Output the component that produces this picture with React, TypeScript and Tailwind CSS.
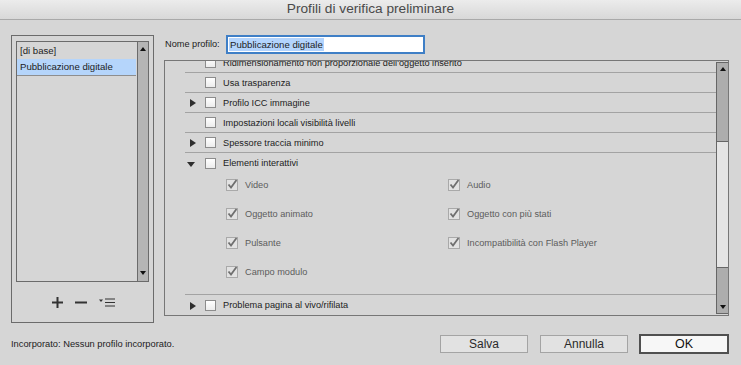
import type { ReactNode } from "react";

type Row = { label: string; arrow?: "right" | "down" };

const TOP_ROWS: Row[] = [
  { label: "Ridimensionamento non proporzionale dell'oggetto inserito" },
  { label: "Usa trasparenza" },
  { label: "Profilo ICC immagine", arrow: "right" },
  { label: "Impostazioni locali visibilità livelli" },
  { label: "Spessore traccia minimo", arrow: "right" },
];

const SUB_ITEMS: string[][] = [
  ["Video", "Audio"],
  ["Oggetto animato", "Oggetto con più stati"],
  ["Pulsante", "Incompatibilità con Flash Player"],
  ["Campo modulo", ""],
];

function Arrow({ dir }: { dir?: "right" | "down" }) {
  if (dir === "right") {
    return (
      <svg width="6" height="8" viewBox="0 0 6 8" className="ml-[5px] mt-[1px]">
        <path d="M0 0 L6 4 L0 8 Z" fill="#2e2e2e" />
      </svg>
    );
  }
  if (dir === "down") {
    return (
      <svg width="8" height="5" viewBox="0 0 8 5" className="ml-[2px] mt-[3px]">
        <path d="M0 0 L8 0 L4 5 Z" fill="#2e2e2e" />
      </svg>
    );
  }
  return null;
}

function Box() {
  return (
    <span className="block h-[11px] w-[11px] shrink-0 border border-[#8c8c8c] bg-gradient-to-b from-white to-[#ececec]" />
  );
}

function CheckedBox() {
  return (
    <span className="relative block h-[12px] w-[12px] shrink-0 border border-[#a9a9a9] bg-[#e2e2e2]">
      <svg width="12" height="12" viewBox="0 0 12 12" className="absolute -left-px -top-[2px]">
        <path d="M2.5 6.5 L5 9.5 L10.5 2" fill="none" stroke="#6f6f6f" strokeWidth="1.8" />
      </svg>
    </span>
  );
}

function ListRow({ row, last }: { row: Row; last?: boolean }) {
  return (
    <div
      className={`ml-[20px] flex h-[20px] shrink-0 items-center ${
        last ? "" : "border-b border-[#a3a3a3]"
      }`}
    >
      <span className="flex w-[20px] items-center">
        <Arrow dir={row.arrow} />
      </span>
      <Box />
      <span className="ml-[7px] mt-[2px] whitespace-nowrap text-[9.2px] text-[#1c1c1c]">{row.label}</span>
    </div>
  );
}

function ScrollArrow({ up }: { up?: boolean }) {
  return (
    <svg width="6" height="4" viewBox="0 0 6 4">
      <path d={up ? "M0 4 L6 4 L3 0 Z" : "M0 0 L6 0 L3 4 Z"} fill="#111" />
    </svg>
  );
}

function Button({ children, primary }: { children: ReactNode; primary?: boolean }) {
  return (
    <button
      type="button"
      className={
        primary
          ? "flex h-[20px] w-[90px] items-center justify-center border-2 border-[#505050] bg-[#f7f7f7] text-[12.5px] text-[#111]"
          : "flex h-[18px] w-[88px] items-center justify-center border border-[#a4a4a4] bg-[#e2e2e2] text-[12px] text-[#2a2a2a]"
      }
    >
      {children}
    </button>
  );
}

export default function App() {
  return (
    <div className="flex h-[365px] w-[741px] flex-col overflow-hidden bg-[#d6d6d6] font-['Liberation_Sans',Arial,sans-serif] text-[#1c1c1c]">
      <div className="flex h-[20px] shrink-0 items-center justify-center border-b border-[#a9a9a9] bg-gradient-to-b from-[#ececec] to-[#d8d8d8]">
        <span className="text-[13.7px] text-[#4a4a4a]">Profili di verifica preliminare</span>
      </div>

      <div className="flex px-[11px] pt-[15px]">
        {/* profile list */}
        <div className="flex h-[288px] w-[143px] shrink-0 flex-col border border-[#6b6b6b] px-[4px] pt-[5px]">
          <div className="flex h-[241px] w-[133px] border border-[#6b6b6b]">
            <div className="flex-1 pr-[1px]">
              <div className="flex h-[17px] items-center pl-[3px] pt-[2px] text-[9.6px]">[di base]</div>
              <div className="flex h-[17px] items-center border-b border-[#8e8e8e] bg-[#b5d5fb] pl-[3px] text-[9.6px]">
                Pubblicazione digitale
              </div>
            </div>
            <div className="flex w-[11px] flex-col items-center justify-between border-l border-[#6b6b6b] bg-[#b5b5b5] pb-[6px] pt-[5px]">
              <ScrollArrow up />
              <ScrollArrow />
            </div>
          </div>
          <div className="flex flex-1 items-center justify-center gap-[12px] pl-[2px]">
            <svg width="11" height="11" viewBox="0 0 11 11">
              <path d="M0 5.5 H11 M5.5 0 V11" stroke="#333" strokeWidth="2" />
            </svg>
            <svg width="12" height="11" viewBox="0 0 12 11">
              <path d="M0 5.5 H12" stroke="#333" strokeWidth="2" />
            </svg>
            <svg width="16" height="9" viewBox="0 0 16 9">
              <path d="M0 1.5 L4 1.5 L2 4 Z" fill="#333" />
              <path d="M6 1 H16 M6 4.5 H16 M6 8 H16" stroke="#333" strokeWidth="1.2" />
            </svg>
          </div>
        </div>

        {/* right side */}
        <div className="ml-[10px] flex w-[565px] flex-col">
          <div className="flex h-[19px] items-center">
            <span className="w-[62px] pl-[1px] text-[9.2px]">Nome profilo:</span>
            <div className="flex h-[19px] w-[199px] items-center border-2 border-[#3f7fc6] bg-white pl-[1px]">
              <span className="bg-[#b3d4fd] px-[1px] text-[9.6px] leading-[13px]">Pubblicazione digitale</span>
            </div>
          </div>

          <div className="mt-[6px] flex h-[256px] border border-[#777]">
            <div className="flex min-w-0 flex-1 flex-col overflow-hidden">
              <div className="-mt-[8px] flex flex-col">
                {TOP_ROWS.map((row) => (
                  <ListRow key={row.label} row={row} />
                ))}
                <ListRow row={{ label: "Elementi interattivi", arrow: "down" }} last />
                <div className="-mt-[2px] ml-[20px] border-b border-[#a3a3a3] pb-[7px] pl-[41px]">
                  {SUB_ITEMS.map((pair) => (
                    <div key={pair[0]} className="grid h-[29px] grid-cols-[222px_1fr] items-center">
                      {pair.map((label) =>
                        label ? (
                          <div key={label} className="flex items-center">
                            <CheckedBox />
                            <span className="ml-[7px] whitespace-nowrap text-[9.2px] text-[#5c5c5c]">{label}</span>
                          </div>
                        ) : (
                          <div key="empty" />
                        ),
                      )}
                    </div>
                  ))}
                </div>
                <ListRow row={{ label: "Problema pagina al vivo/rifilata", arrow: "right" }} last />
              </div>
            </div>
            <div className="my-[1px] flex w-[12px] shrink-0 flex-col border-y border-l border-[#666]">
              <div className="flex h-[78px] justify-center bg-[#adadad] pt-[4px]">
                <ScrollArrow up />
              </div>
              <div className="h-[127px] border-y border-[#666] bg-[#e5e5e5]" />
              <div className="flex flex-1 items-end justify-center bg-[#adadad] pb-[4px]">
                <ScrollArrow />
              </div>
            </div>
          </div>
        </div>
      </div>

      <div className="flex items-center px-[11px] pt-[11px]">
        <span className="mt-[2px] flex-1 text-[9.3px]">Incorporato: Nessun profilo incorporato.</span>
        <Button>Salva</Button>
        <div className="ml-[12px]">
          <Button>Annulla</Button>
        </div>
        <div className="ml-[11px] mr-[1px]">
          <Button primary>OK</Button>
        </div>
      </div>
    </div>
  );
}
